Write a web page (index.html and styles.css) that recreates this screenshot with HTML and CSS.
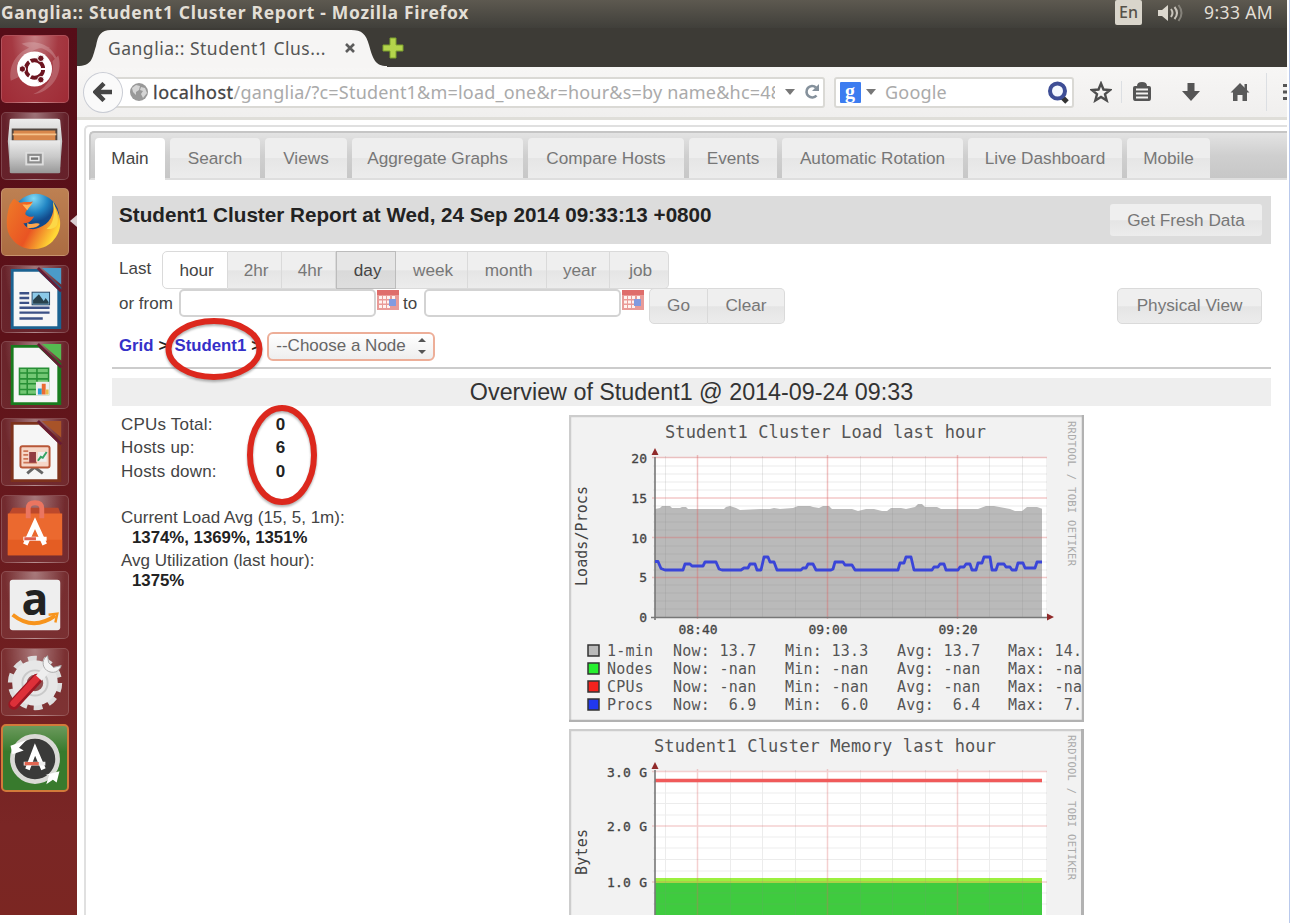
FILE: index.html
```html
<!DOCTYPE html>
<html lang="en">
<head>
<meta charset="utf-8">
<title>Ganglia:: Student1 Cluster Report</title>
<link rel="stylesheet" href="styles.css">
</head>
<body>
<div class="screen">
  <header class="menubar">
    <span class="window-title">Ganglia:: Student1 Cluster Report - Mozilla Firefox</span>
    <div class="indicators">
      <span class="lang">En</span>
      <svg class="volume" viewBox="0 0 27 20" width="27" height="20"><path d="M1 7h4l6-5v16l-6-5H1z" fill="#dcd8cf"/><path d="M14 6q3 4 0 8M17.500 4q5 6 0 12" fill="none" stroke="#c9c5bc" stroke-width="2"/><path d="M21.500 2q6 8 0 16" fill="none" stroke="#85827a" stroke-width="2"/></svg>
      <span class="clock">9:33 AM</span>
    </div>
  </header>
  <div class="desktop">
    <nav class="launcher">
      <svg class="tile dash" viewBox="0 0 68 68"><path d="M9 46C5 20 30 4 50 12c-20-2-34 12-32 30zM58 20c6 20-8 38-26 40 14-6 22-18 20-34zM20 8c20-6 38 6 38 24-4-14-14-22-30-20z" fill="#fff" opacity=".2"/><circle cx="33.500" cy="34" r="18" fill="#fff"/><circle cx="33.500" cy="34" r="9" fill="none" stroke="#6d1520" stroke-width="4"/><g stroke="#fff" stroke-width="2"><path d="M33.500 34L25 48M33.500 34h14M33.500 34L25 20"/></g><circle cx="33.500" cy="34" r="6.500" fill="#fff"/><g fill="#6d1520" stroke="#fff" stroke-width="1"><circle cx="21" cy="34" r="3.300"/><circle cx="40" cy="23" r="3.300"/><circle cx="40" cy="45" r="3.300"/></g></svg>
      <svg class="tile" viewBox="0 0 68 68"><defs><linearGradient id="metal" x2="0" y2="1"><stop stop-color="#ececec"/><stop offset=".5" stop-color="#c9c9c9"/><stop offset="1" stop-color="#989898"/></linearGradient></defs><path d="M8 7q0-1 2-1h47q3 0 3 2l2 21-2 27H8L6 29z" fill="url(#metal)"/><path d="M10 16h47v13H10z" fill="#504641"/><path d="M12 18h43v10H12z" fill="#d8874b"/><path d="M11 22h45" stroke="#f5c28a" stroke-width="2"/><path d="M8 28h52v33q0 1-2 1H10q-2 0-2-1z" fill="url(#metal)"/><rect x="25" y="41" width="17" height="12" fill="#8d8d8d" stroke="#ddd" stroke-width="2"/><rect x="29" y="45" width="9" height="4" fill="#777" stroke="#eee" stroke-width="1.500"/></svg>
      <svg class="tile firefox" viewBox="0 0 68 68"><defs><radialGradient id="globe" cx=".45" cy=".1"><stop stop-color="#7fd8f5"/><stop offset=".6" stop-color="#2286c4"/><stop offset="1" stop-color="#124a8c"/></radialGradient><linearGradient id="fox" x2="1" y2=".5"><stop stop-color="#ef7b28"/><stop offset=".6" stop-color="#e95423"/><stop offset="1" stop-color="#ffd735"/></linearGradient></defs><circle cx="35" cy="29" r="24" fill="url(#globe)"/><path d="M8 16c3-3 2-5 5-6 2 3 5 4 7 4 4-1 8 0 12-1-3 3-3 5-5 7-2 2-3 4-3 6 3 3 6 3 9 2-2 5-7 8-11 7 3 6 9 8 16 5 11-4 16-13 15-25 9 14 10 28-1 39-11 11-32 11-42-3C3 43 4 29 8 16z" fill="url(#fox)"/><path d="M53 13c-1 5 2 8 0 16-1 6-4 10-7 12 4 1 10-1 11-5 2-6-1-12-4-23z" fill="#fcd847"/><path d="M26 35c5 3 9-1 13 1-2 3-7 5-13 4z" fill="#fba54e"/><path d="M21 16c4 0 7 1 11-2-3 4-4 5-6 8z" fill="#ffb35a"/></svg>
      <svg class="tile" viewBox="0 0 68 68"><path d="M9 3h30l22 19v43H9z" fill="#1b6291"/><path d="M12 6h26l19 18v38H12z" fill="#f6f6f6"/><path d="M41 2h20v17z" fill="#4b9bc9"/><path d="M37 2l24 24" stroke="#681c34" stroke-width="3"/><path d="M18 28h10M18 33h10M18 38h10M18 43h31M18 48h31M18 54h24" stroke="#3c5186" stroke-width="2.500"/><rect x="31" y="27" width="18" height="13" fill="#8bc9e8" stroke="#264564"/><path d="M32 39v-4l6-6 5 7 2-3 3 4v2z" fill="#28414c"/></svg>
      <svg class="tile" viewBox="0 0 68 68"><path d="M9 3h30l22 19v43H9z" fill="#197b1e"/><path d="M12 6h26l19 18v38H12z" fill="#f6f6f6"/><path d="M41 2h20v17z" fill="#55ba50"/><path d="M37 2l24 24" stroke="#681c34" stroke-width="3"/><rect x="18" y="27" width="30" height="27" fill="#73c774"/><path d="M18 32h30M18 38h30M18 43h30M18 49h30M26 27v27M36 27v27M18 27h30v27H18z" fill="none" stroke="#278f35" stroke-width="1.600"/><rect x="35" y="41" width="14" height="14" fill="#eee"/><path d="M37 48h4v6h-4z" fill="#2a99d2"/><path d="M41 43h4v11h-4z" fill="#eb6b32"/><path d="M45 49h3v5h-3z" fill="#e8bb49"/></svg>
      <svg class="tile" viewBox="0 0 68 68"><path d="M9 3h30l22 19v43H9z" fill="#7d321c"/><path d="M12 6h26l19 18v38H12z" fill="#f6f6f6"/><path d="M41 2h20v17z" fill="#a85328"/><path d="M37 2l24 24" stroke="#681c34" stroke-width="3"/><path d="M33 50l-7 6M34 50l8 6" stroke="#666" stroke-width="3"/><rect x="19" y="28" width="30" height="22" rx="2" fill="#f6d6c7" stroke="#b85738" stroke-width="2"/><path d="M22 33h5M22 37h5M22 41h5M22 45h14" stroke="#cd7556" stroke-width="1.800"/><path d="M28 34h7v11h-7z" fill="#923b43"/><path d="M37 34h9v10h-9z" fill="#eee"/><path d="M37 43l3-4 2 1 4-6" stroke="#36a363" stroke-width="2" fill="none"/></svg>
      <svg class="tile" viewBox="0 0 68 68"><path d="M11 12h47l3 8H6z" fill="#bc482b"/><path d="M6 18h56v43H6z" fill="#eb692f"/><path d="M6 45h56v16H6z" fill="#e45d23"/><path d="M27 23V13q0-6 7-6t7 6v10" fill="none" stroke="#eb7560" stroke-width="5"/><path d="M24 50l10-22 10 22" fill="none" stroke="#fff" stroke-width="5"/><path d="M22 44h24" stroke="#fff" stroke-width="4"/><path d="M23 44h12" stroke="#df604f" stroke-width="3"/></svg>
      <svg class="tile" viewBox="0 0 68 68"><rect x="8" y="8" width="52" height="52" rx="3" fill="#eee"/><text x="20" y="44" class="amazon-a">a</text><path d="M11 44q21 17 44 1" fill="none" stroke="#f7941d" stroke-width="4"/><path d="M48 44l9-1-2 9" fill="none" stroke="#f7941d" stroke-width="2.500"/></svg>
      <svg class="tile" viewBox="0 0 68 68"><circle cx="34" cy="35" r="25" fill="none" stroke="#ddd" stroke-width="6" stroke-dasharray="9 6.700"/><circle cx="34" cy="35" r="16" fill="none" stroke="#e7e7e7" stroke-width="15"/><circle cx="34" cy="35" r="13" fill="none" stroke="#c9c9c9" stroke-width="2"/><path d="M12 57L36 31" stroke="#9d1723" stroke-width="11" stroke-linecap="round"/><path d="M12 56L36 30" stroke="#dd3039" stroke-width="7" stroke-linecap="round"/><path d="M38 30l9-10" stroke="#eee" stroke-width="8"/><path d="M47 7c-6 3-6 11-1 15 6 4 13 2 15-5l-8 2-5-5z" fill="#f3f3f3" stroke="#aaa"/></svg>
      <svg class="tile updater" viewBox="0 0 68 68"><circle cx="34" cy="35" r="24" fill="#3a3a39" stroke="#dadad6" stroke-width="5"/><path d="M8 21l2 9 12-4-5-3 8-8z" fill="#fff"/><path d="M60 48l-3 12-4-3-7 5 3-10h-4z" fill="#fff"/><path d="M26 46l8-21 9 21" fill="none" stroke="#fff" stroke-width="5"/><path d="M22 40h23" stroke="#eee" stroke-width="4"/><path d="M23 40h15" stroke="#e26651" stroke-width="3.500"/></svg>
      <svg class="running-arrow" viewBox="0 0 7 12" width="7" height="12"><path d="M7 0v12L0 6z" fill="#d9cdd0"/></svg>
    </nav>
    <div class="browser">
      <div class="tabstrip">
        <svg class="tab-shape" viewBox="0 0 310 40" width="310" height="40"><path d="M0 40V38C15 38 15 31 19 18 21 7 24 2 34 2H274C285 2 289 6 292 17 296 31 298 38 310 38V40z" fill="#f6f5f4"/></svg>
        <span class="tab-title">Ganglia:: Student1 Clus...</span>
        <svg class="tab-close" viewBox="0 0 12 12" width="12" height="12"><path d="M2 2l8 8M10 2l-8 8" stroke="#5c5c5c" stroke-width="2.600"/></svg>
        <svg class="tab-new" viewBox="0 0 22 22" width="22" height="22"><path d="M8 1h6v7h7v6h-7v7H8v-7H1V8h7z" fill="#b4d44c" stroke="#7da02c"/></svg>
      </div>
      <div class="toolbar">
        <span class="back"><svg viewBox="0 0 20 20" width="20" height="20"><path d="M11 1.500L2.500 10l8.500 8.500M3 10h16" fill="none" stroke="#454545" stroke-width="4.500"/></svg></span>
        <div class="urlbar">
          <svg viewBox="0 0 18 18" width="18" height="18"><circle cx="9" cy="9" r="9" fill="#999"/><path d="M2 5l4-3 4 1-1 4-3 2v3l-3-3zM11 4l4 1 2 5-4 5-2-4 2-3-3-1z" fill="#d5d5d5"/></svg>
          <span class="url"><b>localhost</b>/ganglia/?c=Student1&amp;m=load_one&amp;r=hour&amp;s=by name&amp;hc=48</span>
          <svg viewBox="0 0 12 8" width="12" height="8"><path d="M1 1h10L6 7z" fill="#777"/></svg>
          <svg class="reload" viewBox="0 0 16 16" width="16" height="16"><path d="M12.500 11.500A5.700 5.700 0 1 1 12 3.500" fill="none" stroke="#85919c" stroke-width="2.600"/><path d="M15 0v7H8z" fill="#85919c"/></svg>
        </div>
        <div class="searchbar">
          <svg viewBox="0 0 21 21" width="21" height="21"><rect width="21" height="21" rx="1" fill="#3c7cf0"/><text x="5" y="16" class="g-letter">g</text></svg>
          <svg class="drop" viewBox="0 0 12 8" width="12" height="8"><path d="M1 1h10L6 7z" fill="#777"/></svg>
          <span class="placeholder">Google</span>
          <svg viewBox="0 0 23 23" width="23" height="23"><path d="M14 15l6 6" stroke="#333" stroke-width="5"/><circle cx="10.500" cy="10" r="7.500" fill="#f4f8ff" stroke="#3e4e96" stroke-width="4"/></svg>
        </div>
        <div class="tools">
          <svg viewBox="0 0 22 22" width="22" height="22"><path d="M11 2.500l2.500 6 6.500.5-5 4.200 1.700 6.300-5.700-3.500-5.700 3.500L7 13.200 2 9l6.500-.500z" fill="none" stroke="#4d4d4d" stroke-width="2.400"/></svg>
          <i class="star-sep"></i>
          <svg class="list" viewBox="0 0 20 20" width="20" height="20"><path d="M3 4h14q2 0 2 2v10q0 3-2 3H3q-2 0-2-3V6q0-2 2-2z" fill="#555"/><path d="M5 4Q5 0 10 0t5 4z" fill="#555"/><path d="M4 7.500h12M4 11.500h12M4 15.500h12" stroke="#f4f3f2" stroke-width="1.800"/></svg>
          <svg viewBox="0 0 20 20" width="20" height="20"><path d="M6.500 1h7v8H19l-9 10L1 9h5.500z" fill="#555"/></svg>
          <svg class="home" viewBox="0 0 20 20" width="20" height="20"><path d="M10 1l9.500 9.500H17V19h-4.500v-6h-5v6H3v-8.500H.500z" fill="#595959"/><path d="M14.500 2H17v6h-2.500z" fill="#595959"/></svg>
          <i class="tool-sep"></i>
          <svg viewBox="0 0 4 18" width="4" height="18"><path d="M0 1h4v3H0zM0 7.500h4v3H0zM0 14h4v3H0z" fill="#555"/></svg>
        </div>
      </div>
      <main class="page">
        <div class="ui-tabs">
          <span class="tab active">Main</span><span class="tab">Search</span><span class="tab">Views</span><span class="tab">Aggregate Graphs</span><span class="tab">Compare Hosts</span><span class="tab">Events</span><span class="tab">Automatic Rotation</span><span class="tab">Live Dashboard</span><span class="tab">Mobile</span>
        </div>
        <div class="content">
          <div class="report-head"><h1>Student1 Cluster Report at Wed, 24 Sep 2014 09:33:13 +0800</h1><span class="button fresh">Get Fresh Data</span></div>
          <div class="range-row">
            <span>Last</span>
            <div class="segments"><span class="seg on">hour</span><span class="seg">2hr</span><span class="seg">4hr</span><span class="seg pressed">day</span><span class="seg">week</span><span class="seg">month</span><span class="seg">year</span><span class="seg">job</span></div>
          </div>
          <div class="from-row">
            <span class="from">or from</span><span class="field"></span>
            <svg class="cal" viewBox="0 0 22 20" width="22" height="20"><path d="M0 0h22v20H0z" fill="#e99b98"/><path d="M0 0h22v5H0z" fill="#df6d6b"/><path d="M2 6h3v3H2zM6 6h3v3H6zM10 6h3v3h-3zM2 10.500h3v3H2zM6 10.500h3v3H6zM10 10.500h3v3h-3zM2 15h3v3H2zM6 15h3v3H6zM10 15h3v3h-3zM15 6h3v3h-3z" fill="#fff2ef"/><path d="M12 9h7v7h-7z" fill="#829be0"/></svg>
            <span class="to">to</span><span class="field"></span>
            <svg class="cal" viewBox="0 0 22 20" width="22" height="20"><path d="M0 0h22v20H0z" fill="#e99b98"/><path d="M0 0h22v5H0z" fill="#df6d6b"/><path d="M2 6h3v3H2zM6 6h3v3H6zM10 6h3v3h-3zM2 10.500h3v3H2zM6 10.500h3v3H6zM10 10.500h3v3h-3zM2 15h3v3H2zM6 15h3v3H6zM10 15h3v3h-3zM15 6h3v3h-3z" fill="#fff2ef"/><path d="M12 9h7v7h-7z" fill="#829be0"/></svg>
            <div class="actions"><span class="seg">Go</span><span class="seg">Clear</span></div>
            <span class="button physical">Physical View</span>
          </div>
          <div class="crumbs"><a>Grid</a><b>&gt;</b><a>Student1</a><b>&gt;</b><span class="select">--Choose a Node<svg viewBox="0 0 8 18" width="8" height="18"><path d="M0 5l4-4 4 4zM0 13h8l-4 4z" fill="#555"/></svg></span></div>
          <h2>Overview of Student1 @ 2014-09-24 09:33</h2>
          <div class="overview">
            <div class="stats">
              <div class="counts"><span>CPUs Total:</span><b>0</b><span>Hosts up:</span><b>6</b><span>Hosts down:</span><b>0</b></div>
              <p>Current Load Avg (15, 5, 1m):</p><p class="val">1374%, 1369%, 1351%</p>
              <p class="util">Avg Utilization (last hour):</p><p class="val">1375%</p>
            </div>
            <div class="graphs">
              <svg class="chart" viewBox="569 415 515 307" width="515" height="307">
                <rect x="569" y="415" width="515" height="307" fill="#f2f2f2"/>
                <path d="M655 458h391v159H655z" fill="#fff"/>
                <clipPath id="load-area"><path d="M655 458h387v159H655z"/></clipPath>
                <path clip-path="url(#load-area)" d="M655 617V509L660 508 662 506h8l2 2h8l2-1h4l2 2h36l2-2 4-1 6 2 4 2 20-1h10l4-1 6 1 13-1 5-2 12 0 3 1 6 1 4-2h6l3 3 20 0 6 2 8-2 8 0 8 2 5 0 4-3h10l5 1 9-2 3-3h4l3 3 12 0 4 2h37l8-3h8l16 3 5 2h7l5-4h10l6 2V617z" fill="#bababa"/>
                <path d="M665.500 456v162M730.500 456v162M762.500 456v162M795.500 456v162M860.500 456v162M892.500 456v162M925.500 456v162M989.500 456v162M1022.500 456v162" stroke="#888" opacity=".18"/><path d="M697.500 455v164M827.500 455v164M957.500 455v164" stroke="#d66" stroke-width="1.500" opacity=".4"/>
                <path d="M653 466h394M653 474h394M653 482h394M653 490h394M653 506h394M653 514h394M653 522h394M653 530h394M653 546h394M653 554h394M653 562h394M653 570h394M653 585h394M653 593h394M653 601h394M653 609h394" stroke="#777" opacity=".14"/>
                <path d="M652 457.500h395M652 498h395M652 537.500h395M652 577.500h395" stroke="#d66" stroke-width="1.500" opacity=".35"/>
                <path d="M655 457v163M651 617.500h397" stroke="#777" stroke-width="1.600"/>
                <path d="M651.500 455l3.500-7 3.500 7zM1047 613.500l7 3.500-7 3.500z" fill="#902a2a"/>
                <path d="M655 561.500h3l3 7 4 1.500h18l2-6h5l2 2h11l2-4h11l3 7 3 1h19l3-2h4l2-4h5l2 6h4l3-13h4l2 5h4l3 8h24l2-2h3l2-4h5l3 6h15l2-1 2-7h8l2 3h7l3 5h43l2-7h4l2-6h5l3 13h18l2-3h4l2-3h4l2 6h12l2-3h4l2-3h4l2 6h4l2-7h4l2-6h6l2 13h4l2-6h6l2 3h4l2 3h4l2-7h5l2 5h10l2-6h5" fill="none" stroke="#3a45d8" stroke-width="2.800" stroke-linejoin="round"/>
                <g class="chart-title"><text x="665" y="438" textLength="321">Student1 Cluster Load last hour</text></g>
                <g class="axis"><text x="647" y="463">20</text><text x="647" y="503">15</text><text x="647" y="543">10</text><text x="647" y="582">5</text><text x="647" y="622">0</text></g>
                <g class="axis ticks"><text x="698" y="634" textLength="39">08:40</text><text x="828" y="634" textLength="39">09:00</text><text x="958" y="634" textLength="39">09:20</text></g>
                <text class="unit" transform="translate(587 586) rotate(-90)" textLength="100">Loads/Procs</text>
                <text class="credit" transform="translate(1068 421) rotate(90)" textLength="145">RRDTOOL / TOBI OETIKER</text>
                <g stroke="#333" stroke-width="1.500"><path d="M588 645h11v11h-11z" fill="#bababa"/><path d="M588 663h11v11h-11z" fill="#26f02f"/><path d="M588 681h11v11h-11z" fill="#f4221d"/><path d="M588 699h11v11h-11z" fill="#2138ee"/></g>
                <path d="M570 722V416h513" fill="none" stroke="#cdcdcd" stroke-width="2.500"/><path d="M569 721h514V415" fill="none" stroke="#b2b2b2" stroke-width="2.500"/>
                <g class="legend">
                  <text x="607" y="656">1-min</text><text x="673" y="656">Now: 13.7</text><text x="785" y="656">Min: 13.3</text><text x="897" y="656">Avg: 13.7</text><text x="1008" y="656">Max: 14.</text>
                  <text x="607" y="674">Nodes</text><text x="673" y="674">Now: -nan</text><text x="785" y="674">Min: -nan</text><text x="897" y="674">Avg: -nan</text><text x="1008" y="674">Max: -na</text>
                  <text x="607" y="692">CPUs</text><text x="673" y="692">Now: -nan</text><text x="785" y="692">Min: -nan</text><text x="897" y="692">Avg: -nan</text><text x="1008" y="692">Max: -na</text>
                  <text x="607" y="710">Procs</text><text x="673" y="710">Now:  6.9</text><text x="785" y="710">Min:  6.0</text><text x="897" y="710">Avg:  6.4</text><text x="1008" y="710">Max:  7.</text>
                </g>
              </svg>
              <svg class="chart" viewBox="569 729 515 186" width="515" height="186">
                <rect x="569" y="729" width="515" height="186" fill="#f2f2f2"/>
                <path d="M655 771h391v144H655z" fill="#fff"/>
                <path d="M655 878h387v37H655z" fill="#9cf03f"/><path d="M655 883h387v32H655z" fill="#3fcb3f"/>
                <path d="M665.500 770v145M730.500 770v145M762.500 770v145M795.500 770v145M860.500 770v145M892.500 770v145M925.500 770v145M989.500 770v145M1022.500 770v145M653 782h394M653 793h394M653 803.500h394M653 815h394M653 837h394M653 848h394M653 859.500h394M653 871h394M653 893h394M653 904h394" stroke="#888" opacity=".15"/>
                <path d="M697.500 769v146M827.500 769v146M957.500 769v146M652 771.500h395M652 826h395M652 882h395" stroke="#d66" stroke-width="1.500" opacity=".3"/>
                <path d="M655 780.500h387" stroke="#f05a5a" stroke-width="3.500"/>
                <path d="M655 770v145" stroke="#777" stroke-width="1.600"/><path d="M651.500 769l3.500-7 3.500 7z" fill="#902a2a"/>
                <g class="chart-title"><text x="654" y="752" textLength="342">Student1 Cluster Memory last hour</text></g>
                <g class="axis"><text x="647" y="777" textLength="40">3.0 G</text><text x="647" y="831" textLength="40">2.0 G</text><text x="647" y="887" textLength="40">1.0 G</text></g>
                <text class="unit" transform="translate(587 875) rotate(-90)" textLength="46">Bytes</text>
                <text class="credit" transform="translate(1068 735) rotate(90)" textLength="145">RRDTOOL / TOBI OETIKER</text>
                <path d="M570 915V730h513" fill="none" stroke="#cdcdcd" stroke-width="2.500"/><path d="M1082.500 729v186" stroke="#b2b2b2" stroke-width="3"/>
              </svg>
            </div>
          </div>
        </div>
      </main>
    </div>
  </div>
  <svg class="annotations" viewBox="0 0 1287 915" width="1287" height="915"><g fill="none" stroke="#dc281d" stroke-width="6"><ellipse cx="214" cy="349" rx="45.500" ry="28"/><ellipse cx="282" cy="455" rx="32" ry="47"/></g></svg>
</div>
</body>
</html>
```
FILE: styles.css
```css
* { box-sizing: border-box; }
body { margin: 0; width: 1290px; height: 923px; overflow: hidden; background: #fff; border-right: 1px solid #b9c9ec; font-family: "Liberation Sans", Arial, sans-serif; }
.screen { position: relative; width: 1287px; height: 915px; overflow: hidden; display: flex; flex-direction: column; }
.menubar { height: 28px; flex: none; display: flex; justify-content: space-between; background: linear-gradient(#5d5950, #403f3a); color: #e3dfd6; font-family: "Noto Sans", sans-serif; padding: 0 13px 0 1px; }
.window-title { font-size: 17.5px; font-weight: 700; line-height: 24px; letter-spacing: .7px; white-space: nowrap; }
.indicators { display: flex; }
.lang { width: 27px; height: 25px; background: #d9d5cb; border-radius: 2px; color: #555149; font-size: 16px; font-weight: 500; line-height: 25px; text-align: center; }
.volume { margin: 3px 20px 0 15px; }
.clock { font-size: 17.5px; line-height: 24px; width: 70px; letter-spacing: .4px; white-space: nowrap; }
.desktop { height: 887px; flex: none; display: flex; }
.launcher { position: relative; width: 77px; flex: none; padding: 7px 0 0 1px; display: flex; flex-direction: column; gap: 8.6px; background: linear-gradient(#560d18, #5d1219 35%, #7a2625 90%, #7b2622); }
.tile { width: 68px; height: 68px; flex: none; border-radius: 5px; border: 1px solid rgba(255,255,255,.16); background: radial-gradient(ellipse at 50% 0, rgba(255,255,255,.42), rgba(255,255,255,.08) 65%); }
.dash { background: radial-gradient(ellipse at 50% 0, #c58084, #a53942 50%, #9f2a35); }
.firefox { background: linear-gradient(#bd8052, #ab6c42); }
.updater { background: linear-gradient(#6b9a5c, #387a2d 40%); border: 2px solid #d27a3a; }
.amazon-a { font: bold 46px "Open Sans", sans-serif; fill: #222; }
.running-arrow { position: absolute; right: 0; top: 187px; }
.browser { flex: 1; min-width: 0; display: flex; flex-direction: column; }
.tabstrip { position: relative; height: 39px; flex: none; background: #3d3b36; display: flex; align-items: center; font-family: "Noto Sans", sans-serif; padding-left: 31px; }
.tab-shape { position: absolute; left: 0; top: 0; }
.tab-title { position: relative; width: 236px; font-size: 17.5px; letter-spacing: .5px; color: #555; white-space: nowrap; }
.tab-close { position: relative; }
.tab-new { margin-left: 26px; position: relative; z-index: 1; }
.toolbar { height: 53px; flex: none; display: flex; align-items: center; background: linear-gradient(#f7f6f5, #f0efee); border-bottom: 3px solid #dfded9; font-family: "Noto Sans", sans-serif; padding-left: 6px; }
.toolbar svg { flex: none; }
.back { width: 41px; height: 41px; border-radius: 50%; border: 1.5px solid #c9ccd4; background: #fafafa; display: grid; place-items: center; z-index: 1; }
.urlbar, .searchbar { height: 31px; border: 2px solid #dad9d5; border-radius: 3px; background: #fff; display: flex; align-items: center; flex: none; }
.urlbar { width: 712px; margin-left: -10px; padding: 0 6px 0 15px; }
.url { width: 622px; margin: 0 9px 0 5px; overflow: hidden; white-space: nowrap; font-size: 18px; letter-spacing: .2px; color: #aaa; flex: none; }
.url b { font-weight: 400; letter-spacing: .5px; color: #444; -webkit-text-stroke: .3px #444; }
.reload { margin-left: 8px; }
.searchbar { width: 240px; margin-left: 9px; padding: 0 2px 0 4px; }
.g-letter { font: bold 20px "Liberation Serif", serif; fill: #fff; }
.drop { margin: 0 8px 0 4px; }
.placeholder { flex: 1; font-size: 18px; letter-spacing: .2px; color: #aaa; }
.tools { display: flex; align-items: center; margin-left: 16px; }
.star-sep { width: 1px; height: 22px; background: #dcdfe3; margin-left: 9px; }
.list { margin: 0 29px 0 10px; }
.home { margin-left: 29px; }
.tool-sep { width: 1px; height: 38px; background: #dcdfe3; margin: 0 16px 0 16px; }
.page { flex: 1; margin: 5px 0 0 7px; border: 2px solid #e0e0e0; border-right: 0; border-bottom: 0; border-top-left-radius: 5px; padding: 4px 0 0 3px; background: #fff; min-height: 0; }
.ui-tabs { height: 49px; border: solid #c5c5c5; border-width: 2px 0 2px 2px; border-bottom-color: #dedede; border-radius: 5px 0 0 0; background: linear-gradient(#e3e3e3, #cfcfcf 50%, #c7c7c7); display: grid; grid-template-columns: 70px 90px 82px 171px 156px 88px 181px 154px 83px; column-gap: 5px; padding: 5px 0 0 4px; }
.tab { background: linear-gradient(#eee 50%, #e6e6e6 51%, #ececec); border-radius: 4px 4px 0 0; color: #777; font-size: 17.2px; line-height: 40px; text-align: center; white-space: nowrap; height: 40px; }
.tab.active { background: #fff; color: #444; height: 42px; }
.content { padding: 16px 16px 0 23px; font-size: 17px; color: #444; }
.report-head { height: 48px; background: #dcdcdc; display: flex; justify-content: space-between; padding: 7px 9px 0 7px; }
h1 { margin: 0; font-size: 20.66px; line-height: 24px; color: #222; white-space: nowrap; }
.button, .seg { background: linear-gradient(#efefef 50%, #e5e5e5 52%, #ececec); color: #777; font-size: 17.2px; text-align: center; white-space: nowrap; }
.fresh { width: 152px; height: 32px; margin-top: 1px; line-height: 33px; border-radius: 3px; }
.range-row { height: 36px; margin-top: 7px; padding-left: 7px; display: flex; line-height: 36px; }
.segments { display: grid; grid-template-columns: 66px 54px 54px 60px 72px 79px 63px 59px; margin-left: 11px; height: 36px; }
.seg { border: 1.5px solid #dadada; border-left-width: 0; line-height: 36px; padding-left: 3px; }
.seg:first-child { border-left-width: 1.5px; border-radius: 5px 0 0 5px; }
.seg:last-child { border-radius: 0 5px 5px 0; }
.seg.on { background: #fff; color: #444; }
.seg.pressed { background: linear-gradient(#e6e6e6 50%, #d9d9d9 52%, #dedede); border: 1.5px solid #bcbcbc; color: #444; }
.from-row { height: 37px; display: flex; padding: 1px 9px 0 7px; line-height: 31px; }
.from { width: 60px; white-space: nowrap; }
.field { width: 197px; height: 28px; margin-top: 1px; border: 2px solid #d3d3d3; border-radius: 5px; }
.cal { margin: 2px 0 0 1px; }
.to { width: 25px; padding-left: 4px; }
.actions { display: grid; grid-template-columns: 59px 77px; margin-left: 5px; height: 36px; }
.actions .seg { line-height: 33px; padding-left: 0; }
.physical { width: 145px; height: 36px; margin-left: auto; border: 1.5px solid #dadada; border-radius: 5px; line-height: 33px; }
.crumbs { display: flex; align-items: center; height: 44px; padding: 0 0 0 7px; margin-top: 1px; border-bottom: 2px solid #ccc; }
.crumbs a { color: #3530c8; font-weight: 700; font-size: 16.8px; }
.crumbs b { width: 21px; padding-left: 5px; color: #222; }
.select { width: 168px; height: 29px; border: 2px solid #edae98; border-radius: 6px; background: linear-gradient(#fff, #eee); display: flex; align-items: center; justify-content: space-between; padding: 0 7px 0 7px; color: #666; white-space: nowrap; }
h2 { margin: 9px 0 0; height: 28px; background: #eee; font-size: 23.3px; font-weight: 400; line-height: 28px; text-align: center; color: #333; }
.overview { display: flex; padding: 9px 0 0 9px; }
.stats { width: 448px; flex: none; }
.counts { display: grid; grid-template-columns: 120px 79px; grid-auto-rows: 23.4px; line-height: 23px; margin-bottom: 25px; margin-top: -2px; }
.counts span { letter-spacing: .2px; }
.counts b { text-align: center; color: #222; }
.stats p { margin: 0; line-height: 20px; }
.stats .val { padding-left: 11px; font-weight: 700; color: #222; font-size: 16.8px; line-height: 19px; }
.stats .util { margin-top: 4px; }
.graphs { display: flex; flex-direction: column; gap: 7px; width: 515px; }
.chart { display: block; }
.chart text { font-family: "DejaVu Sans Mono", monospace; white-space: pre; }
.chart-title text { font-size: 17px; fill: #555; }
.axis text { font-size: 13px; text-anchor: end; fill: #444; stroke: #444; stroke-width: .3px; }
.axis.ticks text { text-anchor: middle; }
.chart .unit { font-size: 15px; fill: #444; }
.chart .credit { font-size: 10.5px; fill: #aaa; }
.chart .legend text { font-size: 15px; letter-spacing: .25px; fill: #555; }
.annotations { position: absolute; left: 0; top: 0; filter: drop-shadow(0 2px 1px rgba(90,90,90,.45)); }
```
